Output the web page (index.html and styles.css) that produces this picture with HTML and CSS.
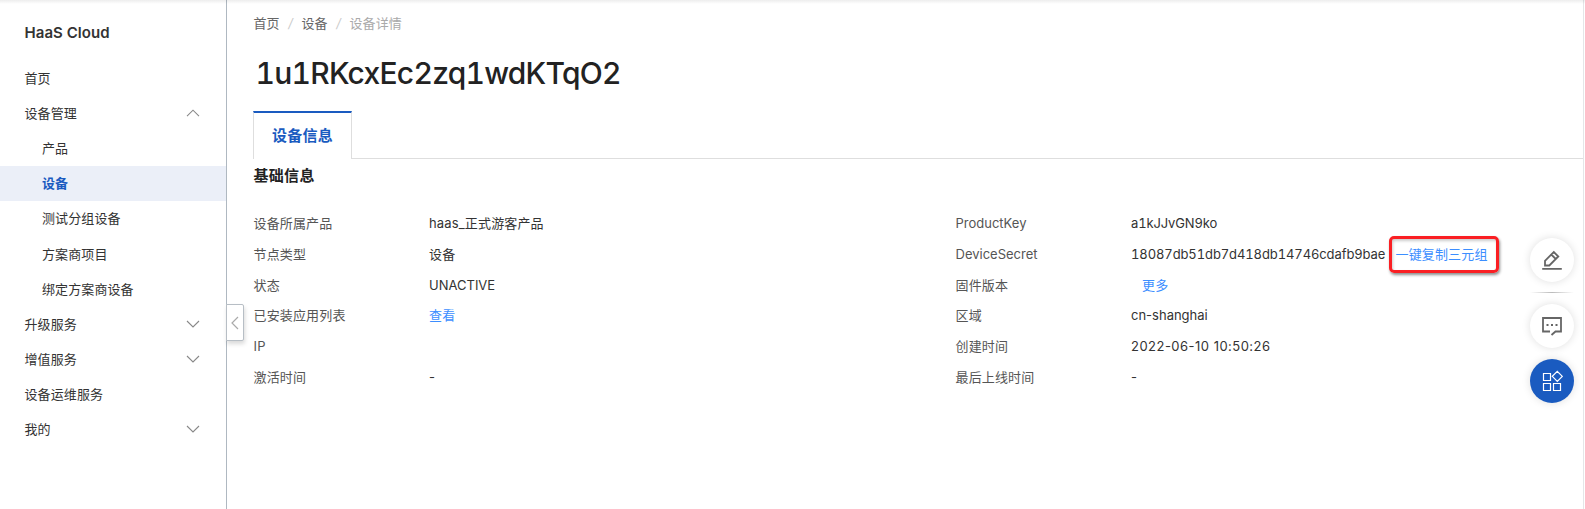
FILE: index.html
```html
<!DOCTYPE html>
<html lang="zh-CN">
<head>
<meta charset="utf-8">
<title>设备详情</title>
<link rel="stylesheet" href="styles.css">
</head>
<body>
<div class="app">
  <aside class="sidebar">
    <div class="brand"><span class="brand-text">HaaS Cloud</span></div>
    <nav class="menu">
      <a class="item">首页</a>
      <a class="item">设备管理<svg class="chevron" viewBox="0 0 14 8"><path d="M1 7.2 7 1.2 13 7.2"/></svg></a>
      <a class="item sub">产品</a>
      <a class="item sub active">设备</a>
      <a class="item sub">测试分组设备</a>
      <a class="item sub">方案商项目</a>
      <a class="item sub">绑定方案商设备</a>
      <a class="item">升级服务<svg class="chevron" viewBox="0 0 14 8"><path d="M1 1 7 7 13 1"/></svg></a>
      <a class="item">增值服务<svg class="chevron" viewBox="0 0 14 8"><path d="M1 1 7 7 13 1"/></svg></a>
      <a class="item">设备运维服务</a>
      <a class="item">我的<svg class="chevron" viewBox="0 0 14 8"><path d="M1 1 7 7 13 1"/></svg></a>
    </nav>
    <button class="collapse" aria-label="收起"><svg viewBox="0 0 8 14"><path d="M7 1 1 7 7 13"/></svg></button>
  </aside>
  <main class="content">
    <div class="breadcrumb"><span>首页</span><i>/</i><span>设备</span><i>/</i><span class="current">设备详情</span></div>
    <h1 class="title"><span class="title-text">1u1RKcxEc2zq1wdKTqO2</span></h1>
    <div class="tabs"><div class="tab">设备信息</div><div class="tab-rest"></div></div>
    <h2 class="section">基础信息</h2>
    <div class="details">
      <dl class="column">
        <dt>设备所属产品</dt><dd>haas_正式游客产品</dd>
        <dt>节点类型</dt><dd>设备</dd>
        <dt>状态</dt><dd><span class="status">UNACTIVE</span></dd>
        <dt>已安装应用列表</dt><dd><a class="link">查看</a></dd>
        <dt>IP</dt><dd></dd>
        <dt>激活时间</dt><dd>-</dd>
      </dl>
      <dl class="column">
        <dt><span class="key">ProductKey</span></dt><dd><span class="product">a1kJJvGN9ko</span></dd>
        <dt><span class="key">DeviceSecret</span></dt><dd><span class="secret">18087db51db7d418db14746cdafb9bae</span><a class="link copy">一键复制三元组</a></dd>
        <dt>固件版本</dt><dd><a class="link more">更多</a></dd>
        <dt>区域</dt><dd><span class="region">cn-shanghai</span></dd>
        <dt>创建时间</dt><dd><span class="created">2022-06-10 10:50:26</span></dd>
        <dt>最后上线时间</dt><dd>-</dd>
      </dl>
    </div>
  </main>
  <div class="floating">
    <button class="round" aria-label="编辑"><svg viewBox="0 0 22 22"><path d="M4 16.5V11.8L12.8 3 17.3 7.5 8.3 16.5ZM10.3 5.5 14.8 10M1.2 19.8H20.8" /></svg></button>
    <div class="divider"></div>
    <button class="round" aria-label="反馈"><svg viewBox="0 0 22 22"><path d="M9 16.5H2V3H20V16.5H14.5L10.5 20"/><path class="dots" d="M5.5 10h2M10 10h2M14.5 10h2"/></svg></button>
    <button class="round primary" aria-label="应用"><svg viewBox="0 0 22 22"><path d="M2.5 3.5H9.5V10.5H2.5ZM2.5 13.5H9.5V20.5H2.5ZM12.5 13.5H19.5V20.5H12.5ZM16.3 1.3 21.3 6.3 16.3 11.3 11.3 6.3Z"/></svg></button>
  </div>
  <div class="topline"></div>
</div>
</body>
</html>
```
FILE: styles.css
```css
* { box-sizing: border-box; }
body {
  margin: 0;
  background: #fff;
  color: #333;
  font: 13px/20px Inter, "Noto Sans CJK SC", sans-serif;
  letter-spacing: .1px;
}
svg { fill: none; stroke: currentColor; }
button { border: 0; padding: 0; }
.app { position: relative; display: flex; width: 1585px; height: 509px; overflow: hidden; }
.topline {
  position: absolute; inset: 0 0 auto; height: 4px;
  background: linear-gradient(rgba(0, 0, 0, .07), rgba(0, 0, 0, 0));
}
.sidebar { position: relative; flex: 0 0 227px; border-right: 1px solid #afb8c1; }
.brand { height: 61px; padding: 22px 0 0 24.5px; font-size: 15px; font-weight: 600; line-height: 22px; letter-spacing: .05px; }
.menu { display: flex; flex-direction: column; }
.item {
  display: flex; align-items: center; justify-content: space-between;
  height: 35.1px; padding: 0 26.5px 1px 24.5px;
}
.sub { padding-left: 42px; }
.active { background: #ebeff8; color: #1a5bc0; font-weight: 600; }
.chevron { width: 14px; height: 8px; color: #888; stroke-width: 1.1; }
.collapse {
  position: absolute; left: 226px; top: 304px; width: 18px; height: 37px;
  display: flex; align-items: center; justify-content: center;
  background: #fff; color: #aaa; border: 1px solid #b7bec5; border-radius: 0 2px 2px 0;
  box-shadow: 1px 3px 4px rgba(0, 0, 0, .15);
}
.collapse svg { width: 8px; height: 14px; flex: none; stroke-width: 1.2; }
.content { flex: 1; padding: 13px 0 0 26.5px; border-right: 1px solid #e5e6e8; margin-right: 1px; }
.breadcrumb { display: flex; height: 22px; color: #666; }
.breadcrumb i { width: 21.8px; text-align: center; color: #ccc; }
.breadcrumb .current { color: #aaa; }
.title { margin: 18px 0 0; height: 40px; font-size: 30px; font-weight: 500; line-height: 40px; color: #222; }
.title-text { margin-left: 2px; letter-spacing: -.74px; font-variant-numeric: tabular-nums; }
.tabs { display: flex; height: 48px; margin: 18px 0 0 -.5px; }
.tab {
  width: 99px; border: 1px solid #dedede; border-top: 2px solid #1a5bc0; border-bottom: 0;
  color: #1a5bc0; font-size: 15px; font-weight: 600; line-height: 45px; text-align: center; letter-spacing: .3px;
}
.tab-rest { flex: 1; border-bottom: 1px solid #dedede; }
.section { margin: 6px 0 0; font-size: 15px; line-height: 22px; font-weight: 600; color: #222; letter-spacing: .3px; }
.details { display: grid; grid-template-columns: 702px 1fr; margin-top: 21px; }
.column { display: grid; grid-template-columns: 175.5px 1fr; grid-auto-rows: 30.75px; margin: 0; line-height: 30.2px; white-space: nowrap; letter-spacing: .15px; }
dt { color: #555; }
dd { margin: 0; color: #333; }
.key, .status, .region { letter-spacing: 0; }
.link { color: #3c8eff; }
.more { margin-left: 11px; }
.product { font-variant-numeric: tabular-nums; letter-spacing: -.12px; }
.created { letter-spacing: .48px; }
.secret { display: inline-block; width: 254px; font-variant-numeric: tabular-nums; letter-spacing: -.1px; }
.copy {
  display: inline-block; height: 37px; width: 110px; line-height: 31px; padding-left: 4px;
  margin: -3px 0 -3px 3.5px; border: 3px solid #fa1f23; border-radius: 5px; vertical-align: top;
  box-shadow: 1px 2px 3px rgba(0, 0, 0, .45), inset 1px 2px 3px rgba(0, 0, 0, .2);
}
.floating {
  position: absolute; left: 1530px; top: 238px; width: 44px;
  display: flex; flex-direction: column; color: #666;
}
.round {
  width: 44px; height: 44px; border-radius: 50%; background: #fff; color: #666;
  display: flex; align-items: center; justify-content: center;
  box-shadow: 0 0 8px rgba(0, 0, 0, .13);
}
.round svg { width: 22px; height: 22px; stroke-width: 1.8; }
.dots { stroke-width: 2; }
.divider { height: 1px; margin: 10px 0 11px; background: linear-gradient(90deg, #fff, #bbb, #fff); }
.primary { margin-top: 11px; background: #1a5bc0; color: #fff; }
.primary svg { stroke-width: 1.2; }
```
